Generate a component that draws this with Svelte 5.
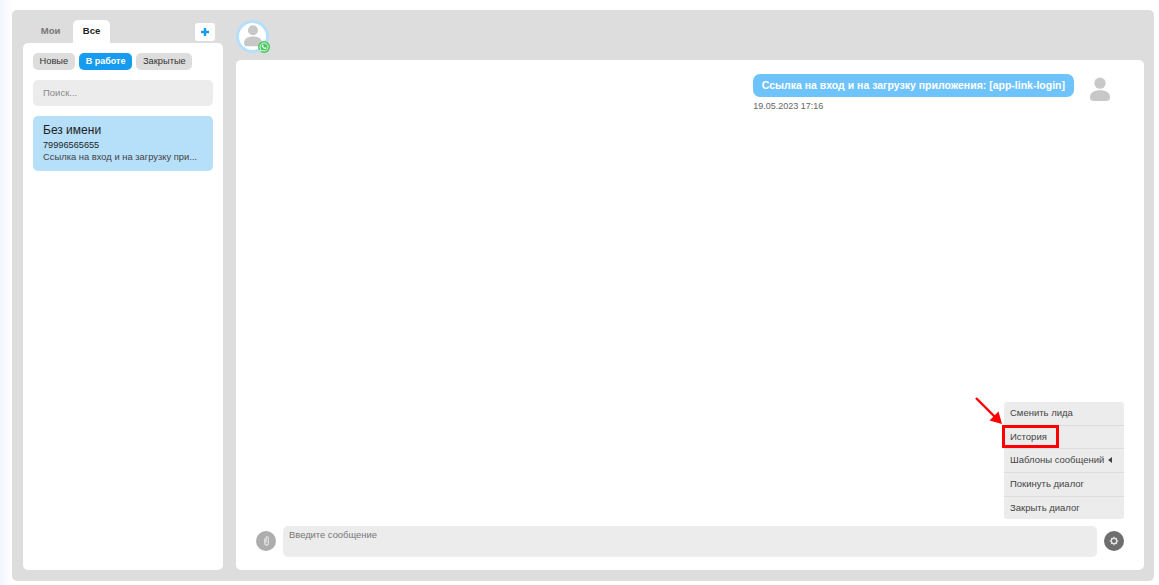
<script>
	const filters = [
		{ name: 'Новые', active: false },
		{ name: 'В работе', active: true },
		{ name: 'Закрытые', active: false },
	];

	const actions = ['Сменить лида', 'История', 'Шаблоны сообщений', 'Покинуть диалог', 'Закрыть диалог'];
</script>

{#snippet person(cls)}
	<svg class={cls} viewBox="0 0 20 24" aria-hidden="true">
		<circle cx="10" cy="6.2" r="5.6" fill="#c8c8c8" />
		<path d="M0 20.5C0 15.5 4 13.2 10 13.2S20 15.5 20 20.5C20 23 18.5 24 16 24H4C1.500 24 0 23 0 20.5Z" fill="#c8c8c8" />
	</svg>
{/snippet}

<div class="page">
	<div class="panel">
		<aside class="sidebar">
			<div class="tabs">
				<span class="tab">Мои</span>
				<span class="tab active">Все</span>
				<button class="add" aria-label="Добавить">
					<svg viewBox="0 0 10 10" width="10" height="10"><path d="M5 1v8M1 5h8" stroke="#159bf0" stroke-width="2.4" /></svg>
				</button>
			</div>
			<div class="side-card">
				<div class="filters">
					{#each filters as f}
						<span class="chip" class:on={f.active}>{f.name}</span>
					{/each}
				</div>
				<div class="search">Поиск...</div>
				<div class="lead">
					<div class="lead-name">Без имени</div>
					<div class="lead-phone">79996565655</div>
					<div class="lead-text">Ссылка на вход и на загрузку при...</div>
				</div>
			</div>
		</aside>

		<main class="chat">
			<div class="chat-head">
				<div class="avatar">
					{@render person('avatar-person')}
					<span class="wa">
						<svg viewBox="0 0 12 12" width="10" height="10">
							<path d="M1 11 1.800 8.200A4.800 4.800 0 1 1 3.800 10.200Z" fill="none" stroke="#fff" stroke-width="1" />
							<path d="M4.200 3.200 5 3.100 5.500 4.400 5 5C5.400 5.800 6 6.400 6.900 6.800L7.500 6.300 8.800 6.900 8.600 7.700C8.300 8.400 7.600 8.600 7 8.400 5.400 7.900 4.100 6.600 3.600 5 3.400 4.300 3.600 3.600 4.200 3.200Z" fill="#fff" />
						</svg>
					</span>
				</div>
			</div>
			<div class="chat-card">
				<div class="messages">
					<div class="message">
						<div class="message-body">
							<div class="bubble">Ссылка на вход и на загрузку приложения: [app-link-login]</div>
							<div class="date">19.05.2023 17:16</div>
						</div>
						{@render person('message-person')}
					</div>
				</div>
				<div class="menu">
					{#each actions as a, i}
						<div class="menu-item">
							{a}
							{#if i === 2}<span class="caret"></span>{/if}
							{#if i === 1}<span class="highlight"></span>{/if}
						</div>
					{/each}
					<svg class="arrow" viewBox="0 0 30 30" width="30" height="30" aria-hidden="true">
						<path d="M2 2 22 22" stroke="#ff0000" stroke-width="2.400" />
						<path d="M28 28 15.500 24.500 24.500 15.500Z" fill="#ff0000" />
					</svg>
				</div>
				<div class="composer">
					<span class="round clip">
						<svg viewBox="0 0 8 14" width="7" height="12">
							<path d="M2 4V10C2 12.500 6 12.500 6 10V3.500C6 1.500 3.500 1.500 3.500 3.500V9" fill="none" stroke="#ececec" stroke-width="1.200" />
						</svg>
					</span>
					<div class="input">Введите сообщение</div>
					<span class="round gear">
						<svg viewBox="0 0 12 12" width="10" height="10">
							<circle cx="6" cy="6" r="3.300" fill="none" stroke="#e4e4e4" stroke-width="1.600" />
							<path d="M6 .8v2M6 9.200v2M.8 6h2M9.200 6h2M2.300 2.300l1.400 1.400M8.300 8.300l1.400 1.400M9.700 2.300 8.300 3.700M3.700 8.300 2.300 9.700" stroke="#e4e4e4" stroke-width="1.200" />
						</svg>
					</span>
				</div>
			</div>
		</main>
	</div>
</div>

<style>
	:global(body) {
		margin: 0;
		font-family: 'Liberation Sans', Arial, sans-serif;
	}

	.page {
		box-sizing: border-box;
		height: 585px;
		padding: 10px 5px 4px 12px;
		background: linear-gradient(90deg, #f1f5ff, #fff 12px);
	}

	.panel {
		display: flex;
		gap: 13px;
		box-sizing: border-box;
		height: 571px;
		padding: 10px 10px 11px 11px;
		background: #ddd;
		border-radius: 5px;
	}

	.sidebar {
		display: flex;
		flex-direction: column;
		flex: 0 0 200px;
	}

	.tabs {
		display: flex;
		height: 23px;
		padding-left: 5px;
	}

	.tab {
		width: 45px;
		padding-top: 5px;
		box-sizing: border-box;
		font-size: 9.500px;
		font-weight: bold;
		line-height: 12px;
		text-align: center;
		color: #777;
	}

	.tab.active {
		width: 37px;
		background: #fff;
		border-radius: 5px 5px 0 0;
		color: #222;
	}

	.add {
		display: flex;
		align-items: center;
		justify-content: center;
		width: 20px;
		height: 18px;
		margin: 3px 0 0 85px;
		padding: 0;
		border: 0;
		border-radius: 3px;
		background: #fff;
	}

	.side-card {
		flex: 1;
		padding: 10px;
		background: #fff;
		border-radius: 5px;
	}

	.filters {
		display: flex;
		gap: 4px;
		height: 17px;
	}

	.chip {
		padding: 0 6.500px;
		font-size: 9.300px;
		line-height: 17px;
		color: #333;
		background: #ddd;
		border-radius: 5px;
	}

	.chip.on {
		padding: 0 7px;
		font-size: 9px;
		font-weight: bold;
		color: #fff;
		background: #159bf0;
	}

	.search {
		box-sizing: border-box;
		height: 26px;
		margin-top: 10px;
		padding-left: 10px;
		font-size: 9.500px;
		line-height: 25px;
		color: #8a8a8a;
		background: #ececec;
		border-radius: 5px;
	}

	.lead {
		box-sizing: border-box;
		height: 55px;
		margin-top: 10px;
		padding: 7px 10px;
		color: #222;
		background: #b6dffa;
		border-radius: 5px;
	}

	.lead-name {
		font-size: 12px;
		line-height: 14px;
	}

	.lead-phone {
		margin-top: 3px;
		font-size: 9.200px;
		line-height: 11px;
	}

	.lead-text {
		font-size: 9.400px;
		line-height: 12px;
		color: #444;
		white-space: nowrap;
		overflow: hidden;
	}

	.chat {
		display: flex;
		flex-direction: column;
		flex: 1;
		min-width: 0;
	}

	.chat-head {
		height: 40px;
		flex: none;
	}

	.avatar {
		position: relative;
		box-sizing: border-box;
		display: flex;
		align-items: flex-end;
		justify-content: center;
		width: 33px;
		height: 33px;
		padding-bottom: 3px;
		background: #fff;
		border: 3px solid #b6dffa;
		border-radius: 50%;
	}

	.avatar-person {
		width: 18px;
		height: 23px;
	}

	.wa {
		position: absolute;
		right: -4px;
		bottom: -3px;
		display: flex;
		align-items: center;
		justify-content: center;
		width: 12px;
		height: 12px;
		background: #49c95f;
		border-radius: 50%;
	}

	.chat-card {
		display: flex;
		flex-direction: column;
		flex: 1;
		min-height: 0;
		padding: 14px 20px 13px;
		background: #fff;
		border-radius: 5px;
	}

	.messages {
		flex: 1;
		min-height: 0;
	}

	.message {
		display: flex;
		justify-content: flex-end;
		gap: 16px;
		padding-right: 14px;
	}

	.message-person {
		flex: none;
		width: 20px;
		height: 24px;
		margin-top: 3px;
	}

	.bubble {
		box-sizing: border-box;
		height: 23px;
		padding: 0 9px 0 8.500px;
		font-size: 10.500px;
		font-weight: bold;
		line-height: 22px;
		color: #fff;
		background: #6fc3fb;
		border-radius: 7px;
		white-space: nowrap;
	}

	.date {
		margin-top: 3px;
		font-size: 9px;
		line-height: 12px;
		color: #666;
	}

	.menu {
		position: relative;
		align-self: flex-end;
		width: 120px;
		margin-bottom: 7px;
		background: #ececec;
		border-radius: 3px;
	}

	.menu-item {
		position: relative;
		box-sizing: border-box;
		height: 24px;
		padding-left: 6px;
		font-size: 9.500px;
		line-height: 22px;
		color: #444;
		border-bottom: 1px solid #dcdcdc;
	}

	.menu-item:nth-child(2) {
		height: 23px;
	}

	.menu-item:last-of-type {
		height: 22px;
		border-bottom: 0;
	}

	.caret {
		display: inline-block;
		margin-left: 1px;
		border: 3px solid transparent;
		border-right: 4px solid #444;
		border-left: 0;
	}

	.highlight {
		position: absolute;
		left: -2px;
		top: -1px;
		box-sizing: border-box;
		width: 57px;
		height: 23px;
		border: 3px solid #ff0000;
	}

	.arrow {
		position: absolute;
		left: -30px;
		top: -6px;
	}

	.composer {
		display: flex;
		align-items: flex-start;
		gap: 7px;
	}

	.round {
		display: flex;
		align-items: center;
		justify-content: center;
		flex: none;
		width: 20px;
		height: 20px;
		margin-top: 5px;
		border-radius: 50%;
	}

	.clip {
		background: #adadad;
	}

	.gear {
		background: #6e6e6e;
	}

	.input {
		flex: 1;
		box-sizing: border-box;
		height: 31px;
		padding: 3px 6px;
		font-size: 9.400px;
		line-height: 12px;
		color: #777;
		background: #ececec;
		border-radius: 5px;
	}
</style>
